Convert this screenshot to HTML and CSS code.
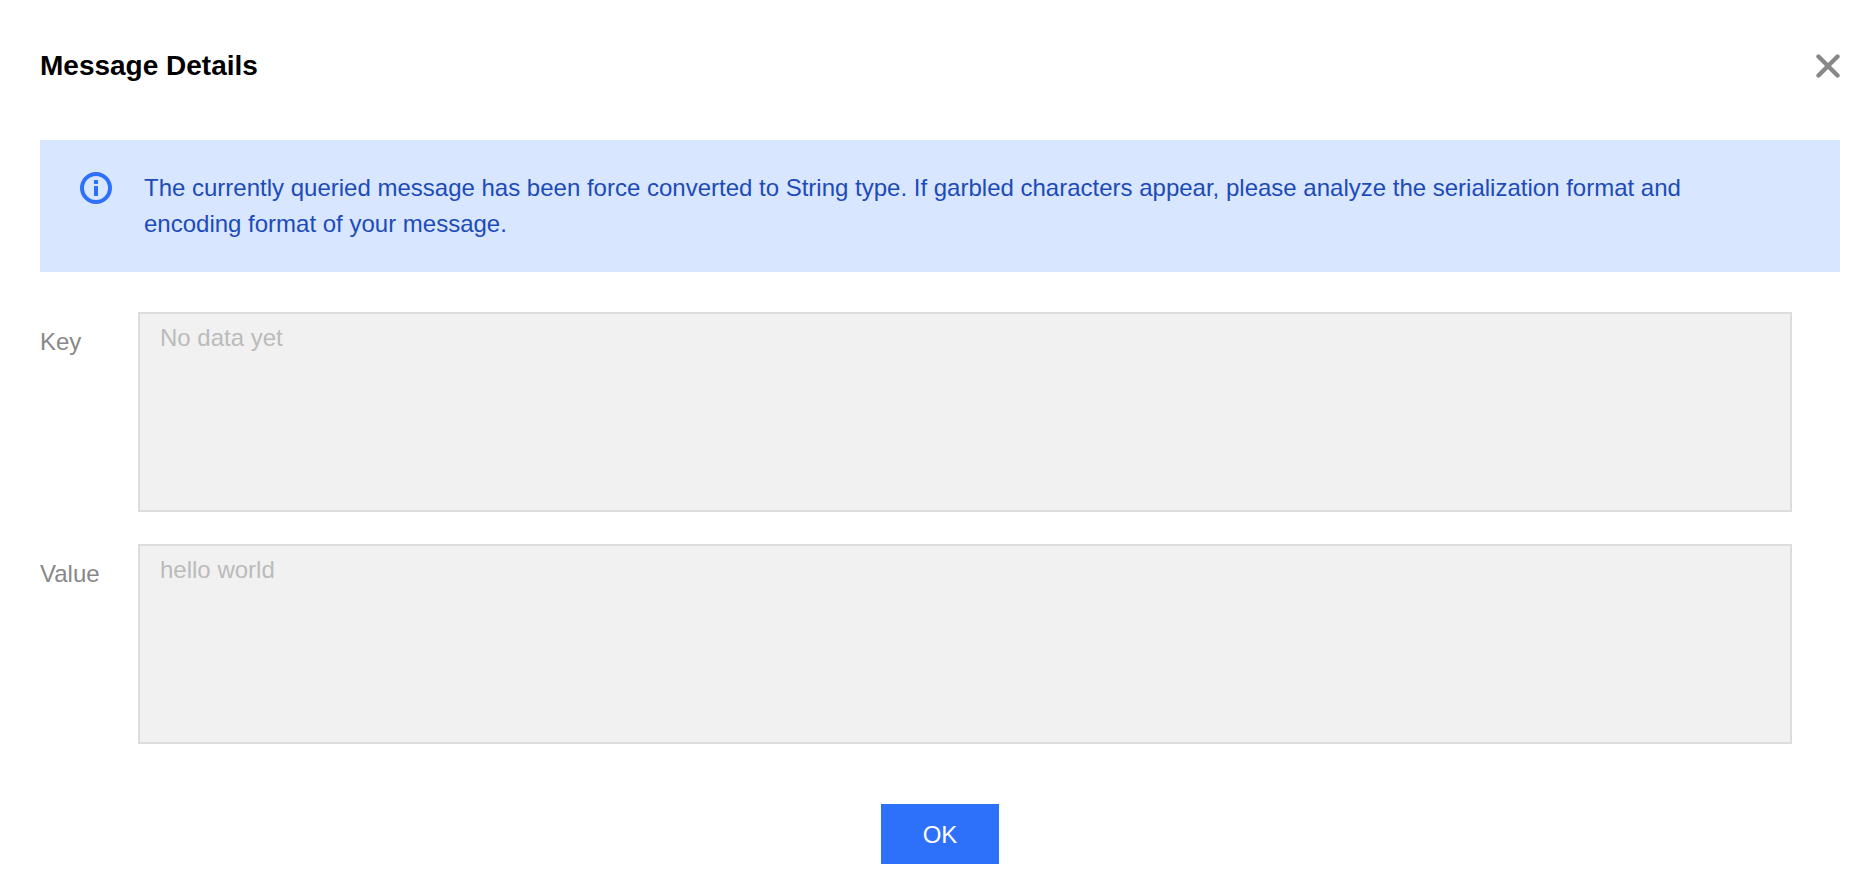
FILE: index.html
```
<!DOCTYPE html>
<html lang="en">
<head>
  <meta charset="UTF-8">
  <title>Message Details</title>
  <meta name="viewport" content="width=device-width, initial-scale=1">
  <link rel="stylesheet" href="styles.css">
</head>
<body>

<div class="dialog" role="dialog" aria-labelledby="dialog-title">
  <div class="dialog-header">
    <h1 id="dialog-title">Message Details</h1>
    <button type="button" class="close" aria-label="Close">
      <svg width="24" height="24" viewBox="0 0 24 24">
        <path d="M2.500 2.500l19 19M21.500 2.500l-19 19" fill="none" stroke="#888" stroke-width="4.400" stroke-linecap="round"/>
      </svg>
    </button>
  </div>

  <div class="alert">
    <svg class="alert-icon" width="32" height="32" viewBox="0 0 32 32">
      <circle cx="16" cy="16" r="14" fill="none" stroke="#2d70fa" stroke-width="4"/>
      <path d="M14 8h4v4h-4zM14 14h4v10h-4z" fill="#2d70fa"/>
    </svg>
    <p>The currently queried message has been force converted to String type. If garbled characters appear, please analyze the serialization format and encoding format of your message.</p>
  </div>

  <form class="form">
    <div class="field">
      <label for="key">Key</label>
      <textarea id="key" placeholder="No data yet" disabled></textarea>
    </div>
    <div class="field">
      <label for="value">Value</label>
      <textarea id="value" disabled>hello world</textarea>
    </div>
  </form>

  <div class="dialog-footer">
    <button type="button" class="btn">OK</button>
  </div>
</div>

</body>
</html>
```
FILE: styles.css
```
:root {
  --primary: #2d70fa;
  --alert-bg: #d8e6ff;
  --alert-text: #1d4bb8;
  --label: #888;
  --disabled-text: #bbb;
  --disabled-bg: #f1f1f1;
  --border: #ddd;
}

* {
  box-sizing: border-box;
}

body {
  margin: 0;
  background-color: #fff;
  font-family: "Liberation Sans", Arial, sans-serif;
  font-size: 24px;
  line-height: 36px;
}

.dialog {
  padding: 48px 22px 18px 40px;
}

.dialog-header {
  display: flex;
  justify-content: space-between;
  align-items: center;
  margin-bottom: 56px;
}

h1 {
  margin: 0;
  font-size: 28px;
  line-height: 36px;
  color: #000;
}

.close {
  display: flex;
  padding: 0;
  border: none;
  background: none;
  cursor: pointer;
}

.alert {
  display: flex;
  align-items: flex-start;
  gap: 32px;
  padding: 30px 60px 30px 40px;
  background-color: var(--alert-bg);
  color: var(--alert-text);
}

.alert-icon {
  flex: none;
  margin-top: 2px;
}

.alert p {
  margin: 0;
}

.form {
  display: flex;
  flex-direction: column;
  gap: 32px;
  margin: 40px 48px 60px 0;
}

.field {
  display: flex;
  align-items: flex-start;
}

label {
  flex: none;
  width: 98px;
  padding-top: 12px;
  color: var(--label);
}

textarea {
  flex: 1;
  height: 200px;
  padding: 6px 20px;
  border: 2px solid var(--border);
  border-radius: 0;
  background-color: var(--disabled-bg);
  color: var(--disabled-text);
  font: inherit;
  resize: none;
}

textarea::placeholder {
  color: var(--disabled-text);
}

.dialog-footer {
  text-align: center;
}

.btn {
  height: 60px;
  padding: 2px 42px 0;
  border: none;
  background-color: var(--primary);
  color: #fff;
  font: inherit;
  cursor: pointer;
}
```
